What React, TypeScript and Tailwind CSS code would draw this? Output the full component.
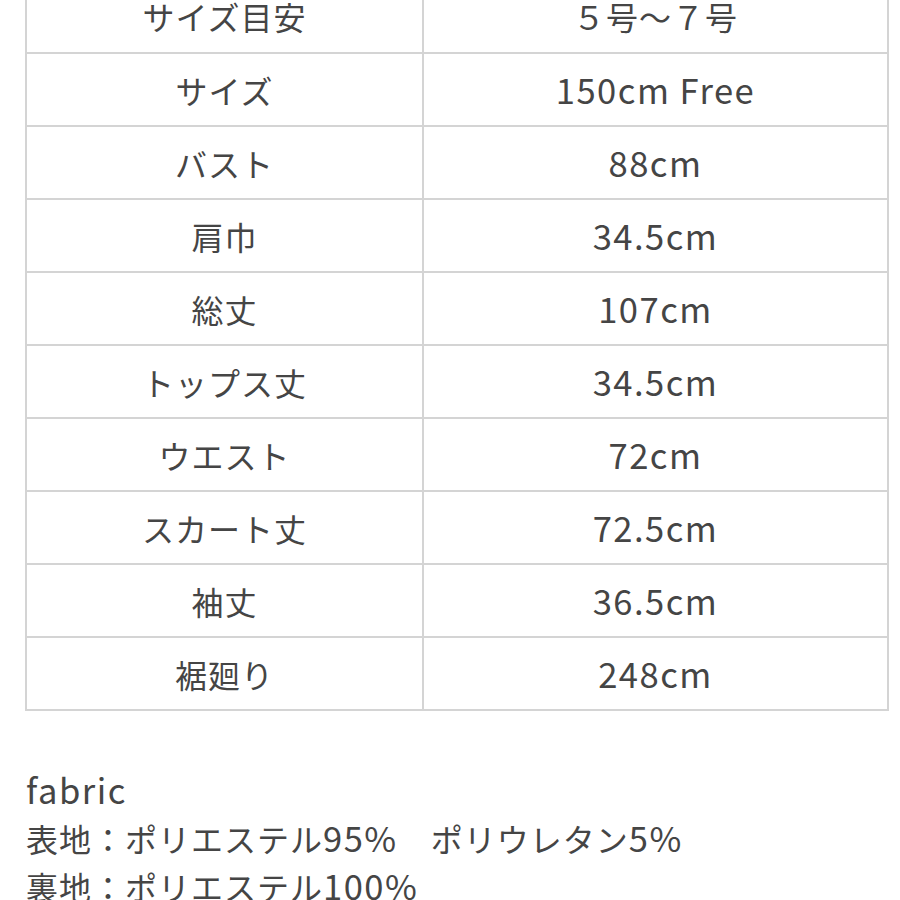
const rows: [string, string][] = [
  ['サイズ目安', '５号〜７号'],
  ['サイズ', '150cm Free'],
  ['バスト', '88cm'],
  ['肩巾', '34.5cm'],
  ['総丈', '107cm'],
  ['トップス丈', '34.5cm'],
  ['ウエスト', '72cm'],
  ['スカート丈', '72.5cm'],
  ['袖丈', '36.5cm'],
  ['裾廻り', '248cm'],
];

// latin runs look wider/larger than the CJK in the original font
function Mixed({ text }: { text: string }) {
  const parts = text.split(/([A-Za-z0-9.%]+(?: [A-Za-z0-9.%]+)*)/);
  return (
    <>
      {parts.map((p, i) =>
        i % 2 === 1 ? (
          <span key={i} className="text-[1.08em] tracking-[1.5px]">
            {p}
          </span>
        ) : (
          <span key={i}>{p}</span>
        )
      )}
    </>
  );
}

export default function App() {
  return (
    <div
      className="w-[900px] h-[900px] overflow-hidden bg-white text-[#454545]"
      style={{ fontFamily: '"Noto Sans CJK JP", "Noto Sans", sans-serif' }}
    >
      <div className="ml-[25px] mt-[-21px] w-[864px] border-2 border-[#d4d4d4] border-t-0">
        {rows.map(([label, value], i) => (
          <div
            key={label}
            className={`grid grid-cols-[397px_1fr] h-[73px] ${i > 0 ? 'border-t-2 border-[#d4d4d4]' : ''}`}
          >
            <div className="flex items-center justify-center border-r-2 border-[#d4d4d4] text-[32px] tracking-[1px]">
              {label}
            </div>
            <div className="flex items-center justify-center text-[32px] tracking-[1px]">
              <Mixed text={value} />
            </div>
          </div>
        ))}
      </div>
      <div className="ml-[26px] mt-[55px] text-[32px] tracking-[1px] leading-[47px]">
        <div>
          <Mixed text="fabric" />
        </div>
        <div>
          <Mixed text="表地：ポリエステル95%　ポリウレタン5%" />
        </div>
        <div>
          <Mixed text="裏地：ポリエステル100%" />
        </div>
      </div>
    </div>
  );
}
